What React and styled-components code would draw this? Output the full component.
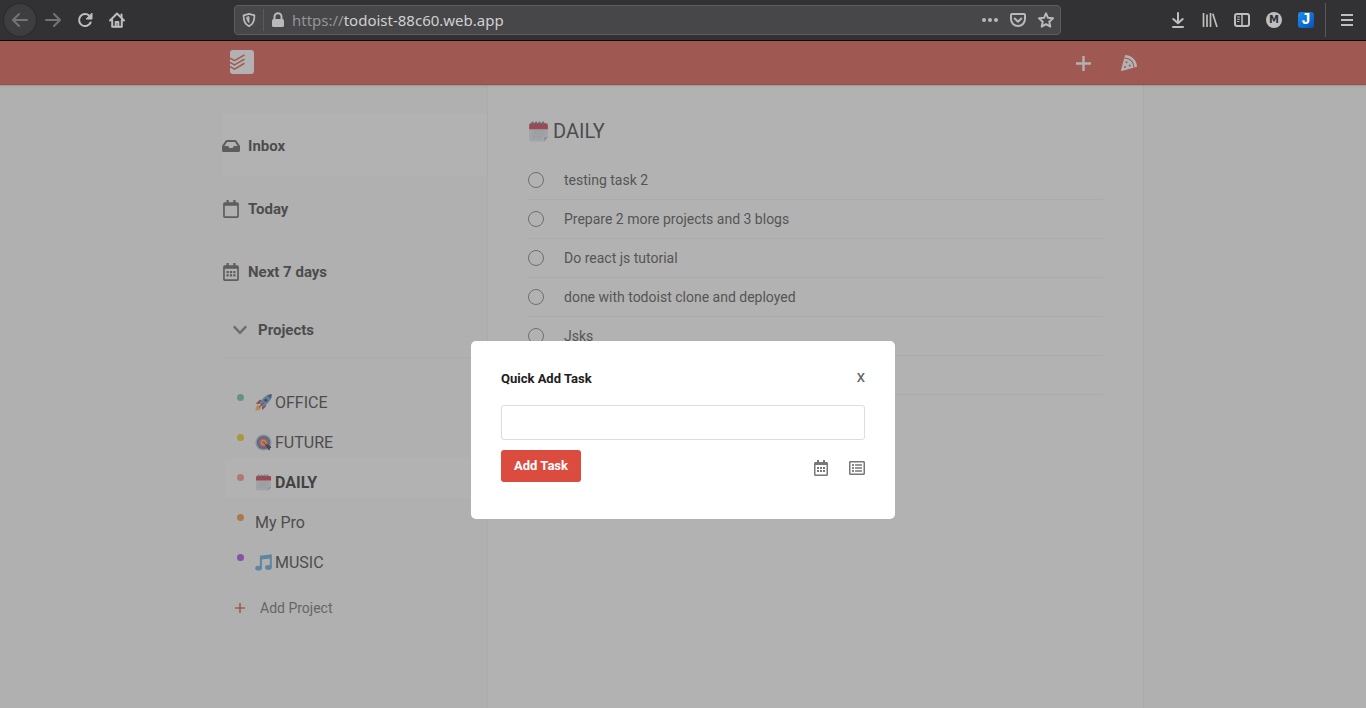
import React from "react";
import styled, { createGlobalStyle, css } from "styled-components";
import {
  FaChevronDown,
  FaInbox,
  FaPizzaSlice,
  FaRegCalendar,
  FaRegCalendarAlt,
  FaRegListAlt,
} from "react-icons/fa";

const GlobalStyle = createGlobalStyle`
  *, *::before, *::after { box-sizing: border-box; }
  body {
    margin: 0;
    font-family: Roboto, "Liberation Sans", sans-serif;
    font-size: 14px;
    color: #333;
    background: #afafaf;
  }
  button {
    font: inherit;
    color: inherit;
    background: none;
    border: 0;
    padding: 0;
    cursor: pointer;
  }
  ul { list-style: none; margin: 0; padding: 0; }
  svg { display: block; flex: none; }
`;

const Screen = styled.div`
  min-height: 100vh;
  display: flex;
  flex-direction: column;
`;

/* ---------- browser bar ---------- */

const BrowserBar = styled.div`
  height: 41px;
  flex: none;
  display: flex;
  align-items: center;
  justify-content: space-between;
  padding: 0 3px 0 4px;
  background: #323234;
  border-bottom: 1px solid #0c0c0d;
  color: #bebebe;
`;

const ToolGroup = styled.div`
  display: flex;
  align-items: center;
`;

const ToolButton = styled.button`
  width: 32px;
  height: 32px;
  display: flex;
  align-items: center;
  justify-content: center;
  border-radius: 50%;
  color: ${(p) => (p.$dim ? "#747475" : "#bebebe")};
  ${(p) =>
    p.$round &&
    css`
      background: #3e3e40;
      box-shadow: 0 0 0 1px #2b2b2d;
      margin-right: 1px;
    `}
`;

const BarRule = styled.span`
  width: 1px;
  height: ${(p) => p.$height};
  background: #5a5a5c;
  margin: ${(p) => p.$margin};
`;

const AddressBar = styled.div`
  flex: 1;
  height: 30px;
  margin: 0 101px;
  display: flex;
  align-items: center;
  background: #474749;
  border: 1px solid #5d5d5f;
  border-radius: 4px;
`;

const AddressIcon = styled.button`
  width: 28px;
  height: 28px;
  display: flex;
  align-items: center;
  justify-content: center;
  color: #b9b9ba;
`;

const Url = styled.div`
  flex: 1;
  font: 15px/20px "Noto Sans", "Open Sans", sans-serif;
  color: #949495;
  strong {
    font-weight: 400;
    color: #d0d0d1;
  }
`;

const LetterBadge = styled.span`
  width: 16px;
  height: 16px;
  border-radius: ${(p) => (p.$square ? "3px" : "50%")};
  background: ${(p) => (p.$square ? "linear-gradient(135deg, #1f8df0, #0455b8)" : "#bebebe")};
  color: ${(p) => (p.$square ? "#fff" : "#323234")};
  font: ${(p) => (p.$square ? '700 16px/16px "Liberation Mono", monospace' : '700 10px/16px "DejaVu Sans", sans-serif')};
  text-align: center;
`;

const Line = ({ size = 16, w = 2, children }) => (
  <svg
    width={size}
    height={size}
    viewBox="0 0 16 16"
    fill="none"
    stroke="currentColor"
    strokeWidth={w}
    strokeLinecap="round"
    strokeLinejoin="round"
    aria-hidden="true"
  >
    {children}
  </svg>
);

function Browser() {
  return (
    <BrowserBar>
      <ToolGroup>
        <ToolButton $dim $round aria-label="Back">
          <Line><path d="M15 8H1.500M7 2 1 8l6 6" /></Line>
        </ToolButton>
        <ToolButton $dim aria-label="Forward">
          <Line><path d="M1 8h13.500M9 2l6 6-6 6" /></Line>
        </ToolButton>
        <ToolButton aria-label="Reload">
          <Line>
            <path d="M13.600 10.500A6 6 0 1 1 12.300 3.800" />
            <path d="M15 1.500V7H9.500z" fill="currentColor" strokeWidth="1" />
          </Line>
        </ToolButton>
        <ToolButton aria-label="Home">
          <Line>
            <path d="M1 8.500 8 1.500l7 7M3.200 8v6.800h9.600V8" />
            <path d="M6.700 14.500V10h2.600v4.500" />
            <path d="M12.500 2.500v3" />
          </Line>
        </ToolButton>
      </ToolGroup>

      <AddressBar>
        <AddressIcon aria-label="Tracking protection">
          <Line size={14}>
            <path d="M8 1 14.200 2.800C14.200 9 12 13.400 8 15 4 13.400 1.800 9 1.800 2.800z" />
            <path d="M8 4.500v6.500C6.200 9.500 5.500 7.500 5.300 5.200z" fill="currentColor" strokeWidth="1" />
          </Line>
        </AddressIcon>
        <BarRule $height="22px" $margin="0" />
        <AddressIcon aria-label="Site information">
          <svg width="14" height="16" viewBox="0 0 14 16" fill="none" aria-hidden="true">
            <path d="M3.500 8V4.800a3.500 3.500 0 0 1 7 0V8" stroke="currentColor" strokeWidth="2" />
            <rect x="1" y="7" width="12" height="8" rx="1.500" fill="currentColor" />
          </svg>
        </AddressIcon>
        <Url>https://<strong>todoist-88c60.web.app</strong></Url>
        <AddressIcon aria-label="Page actions">
          <svg width="16" height="16" viewBox="0 0 16 16" fill="currentColor" aria-hidden="true">
            <circle cx="2" cy="8" r="2" /><circle cx="8" cy="8" r="2" /><circle cx="14" cy="8" r="2" />
          </svg>
        </AddressIcon>
        <AddressIcon aria-label="Save to Pocket">
          <Line>
            <path d="M2 2h12a1 1 0 0 1 1 1v4a7 7 0 0 1-14 0V3a1 1 0 0 1 1-1z" />
            <path d="m4.700 6.500 3.300 3.200 3.300-3.200" />
          </Line>
        </AddressIcon>
        <AddressIcon aria-label="Bookmark">
          <Line>
            <path d="m8 1.300 2 4.500 5 .5-3.700 3.400 1 4.900L8 12.200l-4.300 2.400 1-4.900L1 6.300l5-.5z" />
          </Line>
        </AddressIcon>
      </AddressBar>

      <ToolGroup>
        <ToolButton aria-label="Downloads">
          <Line><path d="M8 1v10M3.300 7 8 11.300 12.700 7M3 15h10" /></Line>
        </ToolButton>
        <ToolButton aria-label="Library">
          <svg width="16" height="16" viewBox="0 0 16 16" fill="none" stroke="currentColor" strokeWidth="1.700" aria-hidden="true">
            <path d="M1.500 1v14M5 2.500V15M8.500 1v14M10.800 1.800 15 15" />
          </svg>
        </ToolButton>
        <ToolButton aria-label="Sidebars">
          <Line>
            <rect x="1" y="2" width="14" height="12" rx="2" />
            <path d="M8 2.500v11" strokeWidth="1.500" />
            <path d="M3.500 5h2M3.500 7.300h2M3.500 9.500h1.500" strokeWidth="1" />
          </Line>
        </ToolButton>
        <ToolButton aria-label="Account"><LetterBadge>M</LetterBadge></ToolButton>
        <ToolButton aria-label="Joplin clipper"><LetterBadge $square>J</LetterBadge></ToolButton>
        <BarRule $height="34px" $margin="0 5px 0 3px" />
        <ToolButton aria-label="Menu">
          <svg width="12" height="12" viewBox="0 0 12 12" fill="currentColor" aria-hidden="true">
            <path d="M0 0h12v2H0zM0 5h12v2H0zM0 10h12v2H0z" />
          </svg>
        </ToolButton>
      </ToolGroup>
    </BrowserBar>
  );
}

/* ---------- emoji drawings ---------- */

const Emoji = styled.svg.attrs({ viewBox: "0 0 18 18", "aria-hidden": true })`
  width: ${(p) => p.$size || "17px"};
  height: ${(p) => p.$size || "17px"};
`;

const Rocket = () => (
  <Emoji>
    <path d="M.500 17.500c0-3 .6-5 2.500-6.200L6.500 15c-1.200 1.800-3 2.500-6 2.500z" fill="#ffb63d" />
    <path d="M.800 10.300 5 6.200l3 .5-3.500 4zM7.800 17l3.800-4-.4-3-4 3.800z" fill="#c4283f" />
    <path d="M17.800.3C12.500.5 8.500 3.300 4.500 10l3.600 3.700C14.500 9.800 17.700 6 17.800.3z" fill="#5f9fce" />
    <path d="M17.800.3c-2 .1-3.600.5-5 1.200l3.700 3.800c.8-1.500 1.200-3 1.300-5z" fill="#3c5877" />
    <circle cx="11.500" cy="6.500" r="1.700" fill="#263e58" />
    <path d="m4 13.800 5-5 .5.700-4.700 5z" fill="#b41832" />
  </Emoji>
);

const Target = () => (
  <Emoji>
    <circle cx="9" cy="9" r="8.500" fill="#a8bdcc" />
    <circle cx="9" cy="9" r="7" fill="#4175a3" />
    <circle cx="9" cy="9" r="5" fill="#ee5361" />
    <circle cx="9" cy="9" r="3" fill="#ffb75c" />
    <circle cx="9" cy="9" r="1.500" fill="#e15850" />
    <path d="m9.500 9.500 3 3" stroke="#352b34" />
    <path d="m11.500 12.500 1.500-1.500 4 3-1.500.5-.5 2.500z" fill="#352b34" stroke="#352b34" strokeLinejoin="round" />
  </Emoji>
);

const CalendarEmoji = ({ $size }) => (
  <Emoji $size={$size}>
    <path d="M1 5h16v9L14 17.500H2.500A1.500 1.500 0 0 1 1 16z" fill="#dde4e8" />
    <path d="M1 7V3.500A1.500 1.500 0 0 1 2.500 2h13A1.500 1.500 0 0 1 17 3.500V7z" fill="#d52a43" />
    <path d="M3 3.500c0-4 2-3 1.500-.5M6 3.500c0-4 2-3 1.500-.5M9 3.500c0-4 2-3 1.500-.5M12 3.500c0-4 2-3 1.500-.5" fill="none" stroke="#596b75" strokeWidth=".9" />
    <path d="M5.500 8.500h9.500M3 11h12M3 13.500h9M5.500 8v8M8 8v8M10.500 8v8M13 8v5" stroke="#c4d1d8" strokeWidth=".6" />
    <path d="M14 17.500V14h3z" fill="#a7b5bf" />
  </Emoji>
);

const Music = () => (
  <Emoji>
    <path d="M5.200 1.800 17.800.300v14h-2.100V4.800L7.300 5.800v9H5.200z" fill="#59a4dc" />
    <ellipse cx="3.800" cy="15" rx="3.600" ry="2.600" fill="#59a4dc" />
    <ellipse cx="14.200" cy="14.300" rx="3.600" ry="2.600" fill="#59a4dc" />
  </Emoji>
);

/* ---------- application ---------- */

const AppArea = styled.div`
  position: relative;
  flex: 1;
  display: flex;
  flex-direction: column;
  background: #fafafa;
`;

const Header = styled.header`
  height: 44px;
  flex: none;
  position: relative;
  background: #db4c3f;
  border-bottom: 1px solid #bc3c2f;
  box-shadow: 0 1px 2px rgba(0, 0, 0, 0.2);
`;

const HeaderInner = styled.div`
  max-width: 922px;
  height: 42px;
  margin: 0 auto;
  padding: 0 7px 0 8px;
  display: flex;
  align-items: center;
  justify-content: space-between;
  color: #fff;
`;

const HeaderActions = styled.div`
  display: flex;
  align-items: center;
  gap: 28px;
  padding-top: 2px;
`;

const HeaderButton = styled.button`
  width: 17px;
  height: 18px;
  display: flex;
  align-items: center;
  justify-content: center;
`;

const Columns = styled.div`
  flex: 1;
  width: 100%;
  max-width: 922px;
  margin: 0 auto;
  display: flex;
`;

const Sidebar = styled.aside`
  width: 266px;
  flex: none;
  padding-top: 29px;
  border-right: 1px solid #f1f1f1;
`;

const NavButton = styled.button`
  width: 100%;
  height: 63px;
  display: flex;
  align-items: center;
  gap: 8px;
  font-size: 15px;
  font-weight: 700;
  background: ${(p) => (p.$active ? "#fff" : "transparent")};
  svg { color: #555; }
`;

const ProjectsToggle = styled.button`
  width: 100%;
  height: 55px;
  display: flex;
  align-items: center;
  gap: 10px;
  padding-left: 10px;
  border-bottom: 1px solid #f1f1f1;
  font-size: 15px;
  font-weight: 700;
  svg { color: #777; }
`;

const ProjectList = styled.ul`
  padding: 20px 0 0 3px;
`;

const ProjectButton = styled.button`
  width: 100%;
  height: 40px;
  display: flex;
  align-items: center;
  padding-left: 12px;
  font-size: 16px;
  font-weight: ${(p) => (p.$active ? 700 : 400)};
  color: ${(p) => (p.$active ? "#202020" : "#333")};
  background: ${(p) => (p.$active ? "#fff" : "transparent")};
`;

const Dot = styled.span`
  width: 7px;
  height: 7px;
  margin: 0 11px 1px 0;
  border-radius: 50%;
  background: ${(p) => p.$color};
`;

const ProjectName = styled.span`
  display: flex;
  align-items: center;
  gap: 3px;
  padding-top: 8px;
`;

const AddProject = styled.button`
  display: flex;
  align-items: center;
  gap: 15px;
  margin-top: 19px;
  padding-left: 13px;
  height: 22px;
  color: #666;
  svg { color: #db4c3f; }
`;

const Main = styled.main`
  flex: 1;
  min-width: 0;
  padding: 32px 40px 0;
  background: #fff;
  border-right: 1px solid #f1f1f1;
`;

const Title = styled.h1`
  display: flex;
  align-items: center;
  gap: 4px;
  margin: 0 0 16px;
  height: 28px;
  font-size: 20px;
  font-weight: 400;
`;

const TaskRow = styled.li`
  height: 39px;
  display: flex;
  align-items: center;
  gap: 20px;
  border-bottom: 1px solid #f1f1f1;
  color: #444;
`;

const TaskCheck = styled.input.attrs({ type: "checkbox" })`
  appearance: none;
  width: 16px;
  height: 16px;
  margin: 0;
  border: 1px solid #777;
  border-radius: 50%;
`;

/* ---------- quick add dialog ---------- */

const Overlay = styled.div`
  position: absolute;
  inset: 0;
  display: flex;
  justify-content: center;
  align-items: flex-start;
  padding-top: 300px;
  background: rgba(102, 102, 102, 0.5);
`;

const Dialog = styled.form`
  width: 424px;
  padding: 30px 30px 37px;
  background: #fff;
  border-radius: 5px;
`;

const DialogHead = styled.div`
  display: flex;
  justify-content: space-between;
  align-items: flex-start;
  height: 34px;
`;

const DialogTitle = styled.label`
  font-size: 13px;
  line-height: 16px;
  font-weight: 700;
  color: #202020;
`;

const CloseButton = styled.button`
  font-size: 13px;
  line-height: 14px;
  font-weight: 500;
  color: #666;
`;

const TaskInput = styled.input`
  display: block;
  width: 100%;
  height: 35px;
  padding: 8px;
  font: inherit;
  border: 1px solid #ddd;
  border-radius: 3px;
  outline: none;
`;

const DialogFoot = styled.div`
  display: flex;
  justify-content: space-between;
  margin-top: 10px;
`;

const SubmitButton = styled.button`
  width: 80px;
  height: 32px;
  padding-bottom: 2px;
  background: #db4c3f;
  border-radius: 3px;
  color: #fff;
  font-size: 13px;
  font-weight: 700;
`;

const DialogTools = styled.div`
  display: flex;
  align-items: flex-end;
  gap: 20px;
  height: 26px;
`;

const DialogTool = styled.button`
  color: #777;
`;

const navItems = [
  { label: "Inbox", icon: FaInbox, active: true },
  { label: "Today", icon: FaRegCalendar },
  { label: "Next 7 days", icon: FaRegCalendarAlt },
];

const projects = [
  { name: "OFFICE", color: "#64bfa9", icon: <Rocket /> },
  { name: "FUTURE", color: "#e8cc0a", icon: <Target /> },
  { name: "DAILY", color: "#fa8a82", icon: <CalendarEmoji />, active: true },
  { name: "My Pro", color: "#f28d2c" },
  { name: "MUSIC", color: "#a63de8", icon: <Music /> },
];

const tasks = [
  "testing task 2",
  "Prepare 2 more projects and 3 blogs",
  "Do react js tutorial",
  "done with todoist clone and deployed",
  "Jsks",
  "",
];

export default function App() {
  return (
    <Screen>
      <GlobalStyle />
      <Browser />
      <AppArea>
        <Header>
          <HeaderInner>
            <svg width="24" height="24" viewBox="0 0 24 24" role="img" aria-label="Todoist">
              <rect width="24" height="24" rx="3" fill="#fff" />
              <path
                d="M0 8.200 4.500 10.700 14.500 4.900M0 12.400 4.500 14.900 14.500 9.100M0 16.600 4.500 19.100 14.500 13.300"
                fill="none"
                stroke="#db4c3f"
                strokeWidth="1.600"
              />
            </svg>
            <HeaderActions>
              <HeaderButton aria-label="Quick add task">
                <svg width="15" height="15" viewBox="0 0 15 15" fill="currentColor" aria-hidden="true">
                  <path d="M6.300 0h2.400v6.300H15v2.400H8.700V15H6.300V8.700H0V6.300h6.300z" />
                </svg>
              </HeaderButton>
              <HeaderButton aria-label="Toggle dark mode"><FaPizzaSlice size={16} /></HeaderButton>
            </HeaderActions>
          </HeaderInner>
        </Header>

        <Columns>
          <Sidebar>
            <nav>
              {navItems.map(({ label, icon: Icon, active }) => (
                <NavButton key={label} $active={active}>
                  <Icon size={18} />
                  {label}
                </NavButton>
              ))}
            </nav>
            <ProjectsToggle aria-expanded="true">
              <FaChevronDown size={16} />
              Projects
            </ProjectsToggle>
            <ProjectList>
              {projects.map((p) => (
                <li key={p.name}>
                  <ProjectButton $active={p.active}>
                    <Dot $color={p.color} />
                    <ProjectName>
                      {p.icon}
                      {p.name}
                    </ProjectName>
                  </ProjectButton>
                </li>
              ))}
            </ProjectList>
            <AddProject>
              <svg width="10" height="10" viewBox="0 0 10 10" fill="currentColor" aria-hidden="true">
                <path d="M4.200 0h1.600v4.200H10v1.600H5.800V10H4.200V5.800H0V4.200h4.200z" />
              </svg>
              Add Project
            </AddProject>
          </Sidebar>

          <Main>
            <Title>
              <CalendarEmoji $size="21px" />
              DAILY
            </Title>
            <ul>
              {tasks.map((t, i) => (
                <TaskRow key={i}>
                  <TaskCheck id={`task-${i}`} aria-label={t || "Task"} />
                  <label htmlFor={`task-${i}`}>{t}</label>
                </TaskRow>
              ))}
            </ul>
          </Main>
        </Columns>

        <Overlay>
          <Dialog role="dialog" aria-label="Quick Add Task" onSubmit={(e) => e.preventDefault()}>
            <DialogHead>
              <DialogTitle htmlFor="quick-task">Quick Add Task</DialogTitle>
              <CloseButton type="button" aria-label="Close">X</CloseButton>
            </DialogHead>
            <TaskInput id="quick-task" type="text" />
            <DialogFoot>
              <SubmitButton type="submit">Add Task</SubmitButton>
              <DialogTools>
                <DialogTool type="button" aria-label="Pick a date"><FaRegCalendarAlt size={16} /></DialogTool>
                <DialogTool type="button" aria-label="Pick a project"><FaRegListAlt size={16} /></DialogTool>
              </DialogTools>
            </DialogFoot>
          </Dialog>
        </Overlay>
      </AppArea>
    </Screen>
  );
}
